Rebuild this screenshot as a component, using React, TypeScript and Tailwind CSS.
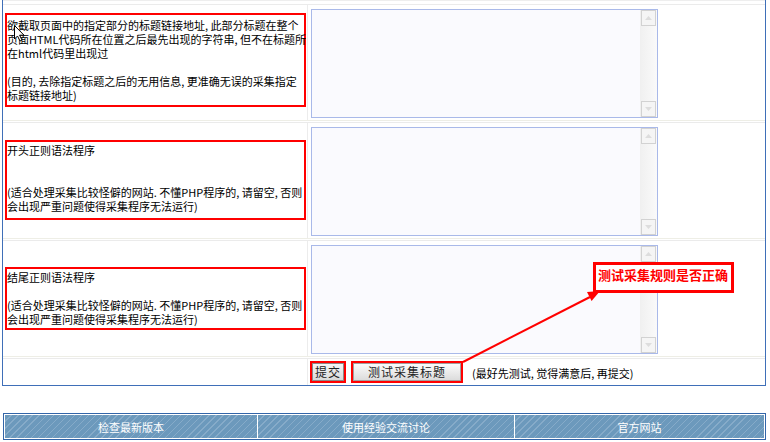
const cjk = { fontFamily: '"Noto Sans CJK SC", "Noto Sans", sans-serif' };

// fake textarea with a disabled-looking classic scrollbar
const RuleBox = () => (
    <div className="flex w-[347px] h-[109px] border border-[#a9b9e9] bg-[#fafafe]">
        <textarea className="flex-1 resize-none bg-transparent outline-none overflow-hidden" />
        <div className="w-[17px] flex flex-col bg-[linear-gradient(90deg,#f0f0f0,#fafafa)]">
            <div className="h-[16px] mx-[1px] border border-[#d2d2d2] bg-[#f5f5f5] flex items-center justify-center">
                <svg width="7" height="4" viewBox="0 0 7 4"><path d="M0 4 L3.5 0 L7 4 Z" fill="#dddddd" /></svg>
            </div>
            <div className="flex-1" />
            <div className="h-[16px] mx-[1px] border border-[#d2d2d2] bg-[#f5f5f5] flex items-center justify-center">
                <svg width="7" height="4" viewBox="0 0 7 4"><path d="M0 0 L3.5 4 L7 0 Z" fill="#dddddd" /></svg>
            </div>
        </div>
    </div>
);

const Row = ({ top, pad, children }: { top: string; pad: string; children: React.ReactNode }) => (
    <div className="flex border-t border-b border-t-[#ebebeb] border-b-[#eeeee6] mb-[1px]">
        <div className={`w-[305px] border-r border-[#ececec] pl-[2px] ${top}`}>
            <div className={`w-[301px] border-2 border-[#ff0000] whitespace-nowrap ${pad}`}>{children}</div>
        </div>
        <div className="pl-[3px] pt-[4px] pb-[2px]">
            <RuleBox />
        </div>
    </div>
);

const App = () => {
    return (
        <div className="relative w-[770px] h-[442px] bg-white overflow-hidden text-[11px] leading-[14px] text-black" style={cjk}>
            <div className="ml-[2px] w-[764px] border-l border-r border-b border-[#3f6fb8]">
                <div className="h-[4px] border-t border-[#eeeeee]" />

                <Row top="pt-[8px]" pad="pt-[3px] pb-[3px]">
                    欲截取页面中的指定部分的标题链接地址, 此部分标题在整个<br />
                    页面HTML代码所在位置之后最先出现的字符串, 但不在标题所<br />
                    在html代码里出现过<br />
                    <br />
                    (目的, 去除指定标题之后的无用信息, 更准确无误的采集指定<br />
                    标题链接地址)
                </Row>

                <Row top="pt-[17px]" pad="pt-[1px] pb-[5px]">
                    开头正则语法程序<br />
                    <br />
                    <br />
                    (适合处理采集比较怪僻的网站. 不懂PHP程序的, 请留空, 否则<br />
                    会出现严重问题使得采集程序无法运行)
                </Row>

                <Row top="pt-[26px]" pad="pt-[1px] pb-[2px]">
                    结尾正则语法程序<br />
                    <br />
                    (适合处理采集比较怪僻的网站. 不懂PHP程序的, 请留空, 否则<br />
                    会出现严重问题使得采集程序无法运行)
                </Row>

                {/* submit row */}
                <div className="flex border-t border-[#ebebeb] h-[27px]">
                    <div className="w-[305px] border-r border-[#ececec]" />
                    <div className="flex items-center pl-[2px] gap-[5px]">
                        <div className="border-2 border-[#ff0000] h-[22px]">
                            <button className="h-[18px] w-[32px] border border-[#8a8a8a] bg-[linear-gradient(#f6f6f6,#d9d9d9)] text-[12px] leading-[16px] tracking-[1px] text-[#222]">
                                提交
                            </button>
                        </div>
                        <div className="border-2 border-[#ff0000] h-[22px]">
                            <button className="h-[18px] w-[108px] border border-[#a0a0a0] bg-[linear-gradient(#fbfbfb,#dcdcdc)] text-[12px] leading-[16px] tracking-[1px] text-[#222]">
                                测试采集标题
                            </button>
                        </div>
                        <span className="ml-[4px] pt-[1px]">(最好先测试, 觉得满意后, 再提交)</span>
                    </div>
                </div>
            </div>

            {/* footer links */}
            <div className="mt-[27px] ml-[3px] w-[763px] h-[27px] border border-[#3365a8] bg-white p-[1px] grid grid-cols-[252px_256px_1fr] gap-[1px] text-white">
                {["检查最新版本", "使用经验交流讨论", "官方网站"].map((t) => (
                    <div
                        key={t}
                        className="flex items-center justify-center bg-[repeating-linear-gradient(135deg,#6c99bc_0px,#6c99bc_4px,#86abc9_4px,#86abc9_5px)]"
                    >
                        {t}
                    </div>
                ))}
            </div>

            {/* mouse pointer */}
            <svg className="absolute left-[14px] top-[25px]" width="12" height="17" viewBox="0 0 12 17">
                <path d="M0.5 0.5 L0.5 14 L3.5 11 L6 16 L8 15 L5.6 10.2 L10 10.2 Z" fill="#ffffff" stroke="#000000" strokeWidth="1" />
            </svg>

            {/* callout arrow */}
            <svg className="absolute left-0 top-0" width="770" height="442">
                <line x1="463" y1="362" x2="590" y2="297" stroke="#ff0000" strokeWidth="2" />
                <polygon points="600,291 591.6,301 587,292" fill="#ff0000" />
            </svg>
            <div className="absolute left-[593px] top-[262px] w-[141px] h-[31px] border-[3px] border-[#ff0000] bg-white pl-[2px] pt-[2px] text-[13px] leading-[16px] font-bold text-[#ff0000]">
                测试采集规则是否正确
            </div>
        </div>
    );
};

export default App;
